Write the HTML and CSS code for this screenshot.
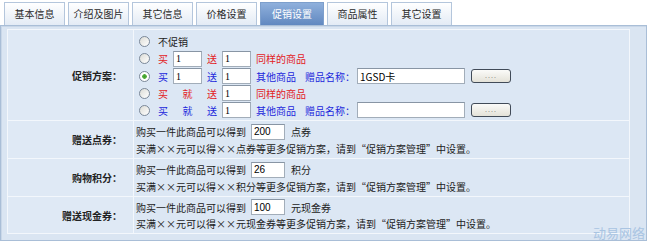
FILE: index.html
```html
<!DOCTYPE html>
<html lang="zh-CN">
<head>
  <meta charset="UTF-8">
  <title>促销设置</title>
  <link rel="stylesheet" href="styles.css">
</head>
<body>

  <!-- Tabs -->
  <div class="tabs">
    <div class="tab">基本信息</div>
    <div class="tab">介绍及图片</div>
    <div class="tab">其它信息</div>
    <div class="tab">价格设置</div>
    <div class="tab active">促销设置</div>
    <div class="tab">商品属性</div>
    <div class="tab">其它设置</div>
  </div>

  <div class="panel">
    <div class="form">

      <!-- 促销方案 -->
      <div class="label promo-label">促销方案：</div>
      <div class="field promo">
        <div class="line">
          <input type="radio" name="promo">
          <span>不促销</span>
        </div>
        <div class="line red">
          <input type="radio" name="promo">
          <span>买</span>
          <input class="num" type="text" value="1">
          <span>送</span>
          <input class="num" type="text" value="1">
          <span>同样的商品</span>
        </div>
        <div class="line blue">
          <input type="radio" name="promo" checked>
          <span>买</span>
          <input class="num" type="text" value="1">
          <span>送</span>
          <input class="num" type="text" value="1">
          <span>其他商品</span>
          <span class="gift-label">赠品名称：</span>
          <input class="gift" type="text" value="1GSD卡">
          <button class="pick">....</button>
        </div>
        <div class="line red">
          <input type="radio" name="promo">
          <span>买</span>
          <span class="slot">就</span>
          <span>送</span>
          <input class="num" type="text" value="1">
          <span>同样的商品</span>
        </div>
        <div class="line blue">
          <input type="radio" name="promo">
          <span>买</span>
          <span class="slot">就</span>
          <span>送</span>
          <input class="num" type="text" value="1">
          <span>其他商品</span>
          <span class="gift-label">赠品名称：</span>
          <input class="gift" type="text" value="">
          <button class="pick">....</button>
        </div>
      </div>

      <!-- 赠送点券 -->
      <div class="label">赠送点券：</div>
      <div class="field">
        <div class="line">
          <span>购买一件此商品可以得到</span>
          <input class="amount" type="text" value="200">
          <span class="unit">点券</span>
        </div>
        <div class="line">买满××元可以得××点券等更多促销方案，请到“促销方案管理”中设置。</div>
      </div>

      <!-- 购物积分 -->
      <div class="label">购物积分：</div>
      <div class="field">
        <div class="line">
          <span>购买一件此商品可以得到</span>
          <input class="amount" type="text" value="26">
          <span class="unit">积分</span>
        </div>
        <div class="line">买满××元可以得××积分等更多促销方案，请到“促销方案管理”中设置。</div>
      </div>

      <!-- 赠送现金券 -->
      <div class="label">赠送现金券：</div>
      <div class="field">
        <div class="line">
          <span>购买一件此商品可以得到</span>
          <input class="amount" type="text" value="100">
          <span class="unit">元现金券</span>
        </div>
        <div class="line">买满××元可以得××元现金券等更多促销方案，请到“促销方案管理”中设置。</div>
      </div>

    </div>
    <div class="watermark">动易网络</div>
  </div>

</body>
</html>
```

FILE: styles.css
```css
/* General Reset */
* {
  margin: 0;
  padding: 0;
  box-sizing: border-box;
}

body {
  font-family: "Noto Sans CJK SC", "Liberation Sans", sans-serif;
  font-size: 10px;
  color: #222;
  background: #fff;
  width: 650px;
  height: 242px;
  overflow: hidden;
}

/* Tabs */
.tabs {
  display: flex;
  gap: 3px;
  padding: 2px 0 0 4px;
}

.tab {
  width: 61px;
  height: 23px;
  line-height: 21px;
  text-align: center;
  color: #2a2a2a;
  border: 1px solid #b4c6dc;
  border-bottom: none;
  background: linear-gradient(#ffffff, #e3ebf5);
}

.tab.active {
  width: 64px;
  color: #fff;
  border-color: #7d9fcc;
  background: linear-gradient(#8fb0dc, #6188c0);
}

/* Panel */
.panel {
  position: relative;
  width: 647px;
  height: 216px;
  border: 1px solid #a9bed7;
  box-shadow: inset 1px 1px 0 #c9d7e8;
  background: #dae5f2;
  padding: 3px 16px 5px 6px;
}

.form {
  display: grid;
  grid-template-columns: 125px 1fr;
  grid-template-rows: 90px 37px 37px 36px;
  gap: 1px;
  background: #f3f7fc;
  border: 1px solid #f3f7fc;
}

.label {
  background: #dfe9f5;
  font-weight: bold;
  text-align: right;
  padding-right: 11px;
  display: flex;
  align-items: center;
  justify-content: flex-end;
}

.field {
  background: #dce7f4;
  padding: 2px 0 1px 2px;
  display: flex;
  flex-direction: column;
  justify-content: center;
}

.field.promo {
  padding-top: 3px;
  justify-content: flex-start;
}

.line {
  display: flex;
  align-items: center;
  gap: 5px;
  height: 17px;
  white-space: nowrap;
}

.promo .line {
  height: 17.4px;
}

.red {
  color: #e3211d;
}

.blue {
  color: #2228dc;
}

.slot {
  width: 29px;
  text-align: center;
}

.gift-label {
  margin-left: 4px;
}

/* Radios */
input[type="radio"] {
  appearance: none;
  width: 11px;
  height: 11px;
  margin: 0 3px 0 3px;
  border: 1px solid #7b8898;
  border-radius: 50%;
  background: linear-gradient(135deg, #dcdcd6, #ffffff);
}

input[type="radio"]:checked {
  background: radial-gradient(circle, #3e9c2c 0, #56b03d 2px, #ffffff 2.6px);
}

/* Text inputs */
input[type="text"] {
  height: 16px;
  font-family: "Liberation Serif", serif;
  font-size: 10px;
  color: #000;
  padding: 0 2px;
  border: 1px solid #a2adb9;
  border-top-color: #8895a4;
  background: #fff;
}

.num {
  width: 29px;
}

.amount {
  width: 34px;
  font-family: "Liberation Sans", sans-serif !important;
}

.unit {
  margin-left: 1px;
}

.gift {
  width: 108px;
  margin-left: -3px;
  font-family: "Noto Sans CJK SC", sans-serif !important;
}

.pick {
  width: 40px;
  height: 14px;
  margin-left: 1px;
  font-size: 7px;
  line-height: 10px;
  color: #666;
  letter-spacing: 1px;
  border: 1px solid #414b58;
  border-radius: 3px;
  background: linear-gradient(#fbfbf9, #e4e2d8);
}

.watermark {
  position: absolute;
  right: 1px;
  bottom: -2px;
  font-size: 13px;
  color: #a9c4e2;
  letter-spacing: 0;
}
```
